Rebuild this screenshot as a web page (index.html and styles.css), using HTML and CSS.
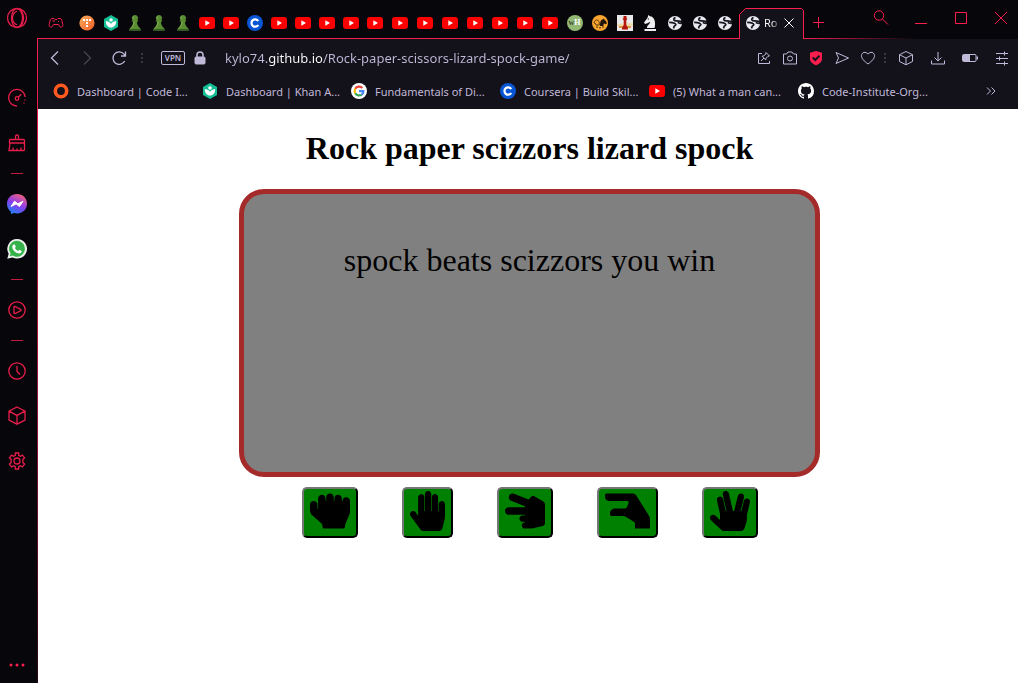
FILE: index.html
```html
<!DOCTYPE html>
<html lang="en">
<head>
<meta charset="utf-8">
<meta name="viewport" content="width=device-width, initial-scale=1">
<title>Rock paper scizzors lizard spock</title>
<link rel="stylesheet" href="styles.css">
</head>
<body>
<svg class="sprite" aria-hidden="true">
  <defs>
    <linearGradient id="messenger-fill" x1="0.2" y1="1" x2="0.7" y2="0">
      <stop offset="0" stop-color="#1488f5"/><stop offset="0.5" stop-color="#8a3df0"/><stop offset="1" stop-color="#f4617a"/>
    </linearGradient>
    <linearGradient id="orange-fill" x1="0" y1="0" x2="1" y2="1">
      <stop offset="0" stop-color="#fcb05c"/><stop offset="1" stop-color="#ee5b2a"/>
    </linearGradient>
  </defs>
  <symbol id="youtube" viewBox="0 0 16 16"><rect y="2" width="16" height="12" rx="3" fill="#f00"/><path d="M6.3 5.3v5.4L11 8z" fill="#fff"/></symbol>
  <symbol id="khan" viewBox="0 0 16 16"><path d="M8 0l7 3.9v8.2L8 16l-7-3.900V3.900z" fill="#14bf96"/><circle cx="8" cy="5" r="1.800" fill="#fff"/><path d="M2.800 6c2.800.3 4.600 1.500 5.200 3 .6-1.500 2.400-2.700 5.200-3 0 4.200-2.200 6.500-5.200 6.500S2.800 10.200 2.800 6z" fill="#fff"/></symbol>
  <symbol id="pawn" viewBox="0 0 16 16"><path d="M8 0a3 3 0 0 1 2.300 5l1.200 1-1.500 1c0 2.500.8 4 2.200 5.300 1 .9 1.500 1.800 1.500 3.200H2.300c0-1.400.5-2.300 1.500-3.200C5.200 11 6 9.500 6 7L4.500 6l1.200-1A3 3 0 0 1 8 0z" fill="#5a8c32"/><path d="M7 1.500a2 2 0 0 0-1 2.700M7 7c0 3-1.500 5-3 6.500" fill="none" stroke="#82ae53"/><path d="M2.300 14h11.400v1.700H2.300z" fill="#365f24"/></symbol>
  <symbol id="coursera" viewBox="0 0 16 16"><circle cx="8" cy="8" r="8" fill="#0956d5"/><path d="M11.300 10a3.700 3.700 0 1 1 0-4" fill="none" stroke="#fff" stroke-width="2.200"/></symbol>
  <symbol id="tynker" viewBox="0 0 16 16"><circle cx="8" cy="8" r="7.600" fill="url(#orange-fill)"/><path d="M4 4h2v2H4zM7 4h2v2H7zM10 4h2v2h-2zM7 7h2v2H7zM7 10h2v2H7z" fill="#fff"/></symbol>
  <symbol id="horse-badge" viewBox="0 0 16 16"><circle cx="8" cy="8" r="8" fill="#f8a62f"/><path d="M8 9.500c0-3 1-5 3.200-5.200l.6-1 .5 1.300c1.300.9 2 2.200 2.600 3.600l-1 1-2-.7-.6 2.500H8z" fill="#20160c"/><path d="M2 8c.3-2.300 1.700-3.300 3.500-3l1 1c1 1 .8 2.600.8 4H4L3.500 8.600z" fill="none" stroke="#5d3a11"/><path d="M4 12h2M7 12.800h2M10 12h2" stroke="#4a2f0c"/></symbol>
  <symbol id="chess-board" viewBox="0 0 16 16"><path d="M0 0h16v16H0z" fill="#e9e9eb"/><path d="M0 9l16-1v3H0z" fill="#efd9a8"/><path d="M2 11h12v2H2z" fill="#d9974a"/><path d="M6.500 1h3v2.500h1L9.300 5.500V10l1.700 3v1.500H5V13l1.700-3V5.500l-1.200-2h1z" fill="#b5160c"/></symbol>
  <symbol id="knight" viewBox="0 0 16 16"><path d="M5 13c0-3 3-4 3.300-6.300L5.500 8.300 3 9 2 7.500l3-4L6 1.600V0l2 1.200C11.500 1.600 13.500 5 13 10.500L12.500 13zM2.500 14H14v2H2.500z" fill="#eeeef0"/><circle cx="6.300" cy="4" r=".7" fill="#333"/></symbol>
  <symbol id="globe" viewBox="0 0 16 16"><circle cx="8" cy="8" r="7" fill="#e8eaf0"/><path d="M8.500 2.600C7 3 6.500 4 7 5c.5.900 1.500 1 3 .9 1.600 0 2.600.5 4.300.3v2c-1.700.4-2.300-.6-3.600-.5M2.200 7.300c2 .1 3.800.2 5.300 1 1.700.8 1.700 1.700.3 2.500-1 .6-.8 1.500-1.300 2.500" fill="none" stroke="#15131c" stroke-width="1.700"/></symbol>
  <symbol id="ring" viewBox="0 0 16 16"><circle cx="8" cy="8" r="5.700" fill="none" stroke="#ff5a1f" stroke-width="3.600"/></symbol>
  <symbol id="google" viewBox="0 0 16 16"><circle cx="8" cy="8" r="8" fill="#fff"/><g fill="none" stroke-width="2.200"><path d="M4.200 5.800A4.500 4.500 0 0 1 11.300 4.900" stroke="#ea4335"/><path d="M4.200 5.800a4.500 4.500 0 0 0 0 4.400" stroke="#fbbc05"/><path d="M4.200 10.200a4.500 4.500 0 0 0 6.500 1.400" stroke="#34a853"/><path d="M10.700 11.600A4.500 4.500 0 0 0 12.400 8.200H8" stroke="#4285f4"/></g></symbol>
  <symbol id="github" viewBox="0 0 16 16"><path fill="#fff" d="M8 0C3.580 0 0 3.580 0 8c0 3.540 2.290 6.530 5.470 7.590.4.070.55-.17.55-.38 0-.19-.01-.82-.01-1.490-2.010.37-2.530-.49-2.690-.94-.09-.23-.48-.94-.82-1.130-.28-.15-.68-.52-.01-.53.63-.01 1.080.58 1.230.82.72 1.210 1.870.87 2.330.66.07-.52.28-.87.51-1.070-1.780-.2-3.640-.89-3.640-3.950 0-.87.31-1.590.82-2.150-.08-.2-.36-1.020.08-2.120 0 0 .67-.21 2.200.82.64-.18 1.320-.27 2-.27s1.360.09 2 .27c1.530-1.040 2.200-.82 2.200-.82.44 1.100.16 1.920.08 2.120.51.56.82 1.270.82 2.150 0 3.070-1.870 3.750-3.650 3.950.29.25.54.73.54 1.480 0 1.070-.01 1.930-.01 2.200 0 .21.15.46.55.38A8.010 8.010 0 0 0 16 8c0-4.420-3.580-8-8-8z"/></symbol>
</svg>

<aside class="sidebar">
  <button class="opera" aria-label="Opera menu"><svg class="line" width="22" height="22" viewBox="0 0 22 22"><circle cx="11" cy="11" r="9.500"/><ellipse cx="11" cy="11" rx="5.500" ry="9.300"/><path d="M11 4c-6 3-6 11 0 14M13 2c6 4 6 14 0 18"/></svg></button>
  <nav class="rail" aria-label="Sidebar">
    <button aria-label="Speed dial"><svg class="line" viewBox="0 0 20 20"><path d="M10 18A8.300 8.300 0 1 1 18.200 9M11.200 9.200l3-3M18 11.500v1M17 14.500v1"/><circle cx="10" cy="10.500" r="1.800"/></svg></button>
    <button aria-label="Cleaner"><svg class="line" viewBox="0 0 20 20"><path d="M8.500 6V3.500a1.500 1.500 0 0 1 3 0V6M3.500 6.500h13a1 1 0 0 1 1 1V10h-15V7.500a1 1 0 0 1 1-1zM3 10l-1 7.500h14.500a1 1 0 0 0 1-1V10M6 17.500v-3M10 17.500v-2M14 17.500v-3"/></svg></button>
    <hr>
    <button aria-label="Messenger"><svg viewBox="0 0 20 20"><path d="M10 0c5.700 0 10 4.200 10 9.700s-4.300 9.700-10 9.700c-1 0-2-.1-2.900-.4L4 20l-.3-2.500A9.600 9.600 0 0 1 0 9.700C0 4.200 4.300 0 10 0z" fill="url(#messenger-fill)"/><path d="M4 12.500l3.500-5.300 3.400 2.600L16 7.200l-3.500 5.300-3.400-2.600z" fill="#fff" stroke="#fff" stroke-linejoin="round"/></svg></button>
    <button aria-label="WhatsApp"><svg viewBox="0 0 20 20"><path d="M10.200 0a9.800 9.800 0 1 1-4.700 18.400L.3 19.800l1.400-5A9.800 9.800 0 0 1 10.200 0z" fill="#eef2ee"/><path d="M10.200 1.700a8 8 0 1 1-4.500 14.800l-3 .8.900-2.900a8 8 0 0 1 6.600-12.700z" fill="#35b34a"/><path d="M6.500 5.500h1.300l1 2.300-.9 1.300c.8 1.500 1.800 2.300 3.200 2.900l1.200-1.200 2.400 1.200c.1 1.700-1.200 2.600-2.700 2.500C8.500 14 5.500 11 5.300 8.200c0-1.200.5-2.200 1.200-2.700z" fill="#fff"/></svg></button>
    <hr>
    <button aria-label="Player"><svg class="line" viewBox="0 0 20 20"><circle cx="10" cy="10" r="8.200"/><path d="M7 6.800v6.400l1 .3 6-2.800v-1L8 6.500z"/></svg></button>
    <hr>
    <button aria-label="History"><svg class="line" viewBox="0 0 20 20"><circle cx="10" cy="10" r="8.200"/><path d="M10 5v5.500l3 3"/></svg></button>
    <button aria-label="Extensions"><svg class="line" viewBox="0 0 20 20"><path d="M10 1l8 4.200v8.800l-8 4.200-8-4.200V5.200zM2 5.200l8 4.200 8-4.200M10 9.400v8.800"/></svg></button>
    <button aria-label="Settings"><svg class="line" viewBox="0 0 20 20"><circle cx="10" cy="10" r="3"/><path d="M8.300 2h3.400v2.300l1.700 1 2-1.200 2.200 2.800-1.700 1.500v3.200l1.700 1.500-2.200 2.800-2-1.200-1.700 1V18H8.300v-2.300l-1.700-1-2 1.200-2.200-2.800 1.700-1.500V8.400L2.400 6.900l2.200-2.800 2 1.200 1.700-1z"/></svg></button>
  </nav>
  <button class="more" aria-label="Sidebar setup"><svg width="16" height="4" viewBox="0 0 16 4"><circle cx="2" cy="2" r="1.500"/><circle cx="8" cy="2" r="1.500"/><circle cx="14" cy="2" r="1.500"/></svg></button>
</aside>

<div class="window">
  <header class="tab-strip">
    <div class="tabs">
      <button class="corner" aria-label="GX Corner"><svg class="line" width="16" height="16" viewBox="0 0 16 16"><path d="M4 3.500h2l1 1h2l1-1h2c1.500 0 2 2 2.800 6 .5 2.500-2 3.500-3 2l-1.300-2h-5l-1.300 2c-1 1.500-3.500.5-3-2C2 5.500 2.500 3.500 4 3.500zM4.500 6h2.500M10.500 6v1"/></svg></button>
      <button class="tab" aria-label="Tab 1"><svg><use href="#tynker"/></svg></button>
      <button class="tab" aria-label="Tab 2"><svg><use href="#khan"/></svg></button>
      <button class="tab" aria-label="Tab 3"><svg><use href="#pawn"/></svg></button>
      <button class="tab" aria-label="Tab 4"><svg><use href="#pawn"/></svg></button>
      <button class="tab" aria-label="Tab 5"><svg><use href="#pawn"/></svg></button>
      <button class="tab" aria-label="Tab 6"><svg><use href="#youtube"/></svg></button>
      <button class="tab" aria-label="Tab 7"><svg><use href="#youtube"/></svg></button>
      <button class="tab" aria-label="Tab 8"><svg><use href="#coursera"/></svg></button>
      <button class="tab" aria-label="Tab 9"><svg><use href="#youtube"/></svg></button>
      <button class="tab" aria-label="Tab 10"><svg><use href="#youtube"/></svg></button>
      <button class="tab" aria-label="Tab 11"><svg><use href="#youtube"/></svg></button>
      <button class="tab" aria-label="Tab 12"><svg><use href="#youtube"/></svg></button>
      <button class="tab" aria-label="Tab 13"><svg><use href="#youtube"/></svg></button>
      <button class="tab wide" aria-label="Tab 14"><svg><use href="#youtube"/></svg></button>
      <button class="tab wide" aria-label="Tab 15"><svg><use href="#youtube"/></svg></button>
      <button class="tab wide" aria-label="Tab 16"><svg><use href="#youtube"/></svg></button>
      <button class="tab wide" aria-label="Tab 17"><svg><use href="#youtube"/></svg></button>
      <button class="tab wide" aria-label="Tab 18"><svg><use href="#youtube"/></svg></button>
      <button class="tab wide" aria-label="Tab 19"><svg><use href="#youtube"/></svg></button>
      <button class="tab wide" aria-label="Tab 20"><svg><use href="#youtube"/></svg></button>
      <button class="tab wide"><span class="wikihow">w<b>H</b></span></button>
      <button class="tab wide" aria-label="Tab 22"><svg><use href="#horse-badge"/></svg></button>
      <button class="tab wide" aria-label="Tab 23"><svg><use href="#chess-board"/></svg></button>
      <button class="tab wide" aria-label="Tab 24"><svg><use href="#knight"/></svg></button>
      <button class="tab wide" aria-label="Tab 25"><svg><use href="#globe"/></svg></button>
      <button class="tab wide" aria-label="Tab 26"><svg><use href="#globe"/></svg></button>
      <button class="tab wide" aria-label="Tab 27"><svg><use href="#globe"/></svg></button>
    </div>
    <div class="active-tab">
      <svg class="outline" viewBox="0 0 65 31" preserveAspectRatio="none" aria-hidden="true"><path d="M.5 31V6.500l6-6h56l2 2V31"/></svg>
      <svg class="favicon" aria-hidden="true"><use href="#globe"/></svg>
      <span class="tab-title">Ro</span>
      <button class="close-tab" aria-label="Close tab"><svg width="10" height="10" viewBox="0 0 10 10"><path d="M.5.500l9 9M9.500.500l-9 9"/></svg></button>
    </div>
    <div class="strip-end">
      <button class="new-tab" aria-label="New tab"><svg class="line" width="12" height="12" viewBox="0 0 12 12"><path d="M6.500 1v11M1 6.500h11"/></svg></button>
      <div class="window-controls">
        <button aria-label="Search tabs"><svg class="line" width="16" height="16" viewBox="0 0 16 16"><circle cx="6" cy="5.500" r="4.700"/><path d="M9.500 9l5.500 5.500"/></svg></button>
        <button aria-label="Minimize"><svg class="line" width="16" height="16" viewBox="0 0 16 16"><path d="M2 13.500h12"/></svg></button>
        <button aria-label="Maximize"><svg class="line" width="16" height="16" viewBox="0 0 16 16"><path d="M2.500 2.500h11v11h-11z"/></svg></button>
        <button aria-label="Close"><svg class="line" width="16" height="16" viewBox="0 0 16 16"><path d="M2 2l12 12M14 2L2 14"/></svg></button>
      </div>
    </div>
  </header>

  <div class="toolbar">
    <div class="history">
      <button aria-label="Back"><svg viewBox="0 0 16 16"><path d="M11 1.500L4.500 8l6.500 6.500"/></svg></button>
      <button aria-label="Forward" disabled><svg viewBox="0 0 16 16"><path d="M5 1.500L11.500 8 5 14.500"/></svg></button>
      <button aria-label="Reload"><svg viewBox="0 0 16 16"><path d="M13.700 11A6.200 6.200 0 1 1 13 4.200L14.500 6M14.500 1.500V6H10"/></svg></button>
    </div>
    <span class="dots"></span>
    <button class="vpn">VPN</button>
    <svg class="lock" width="12" height="14" viewBox="0 0 12 14" aria-hidden="true"><path d="M3 6V4a3 3 0 0 1 6 0v2"/><rect x="1" y="6" width="10" height="7" rx="1"/></svg>
    <input class="address" type="text" aria-label="Address" value="kylo74.github.io/Rock-paper-scissors-lizard-spock-game/">
    <div class="tools">
      <button aria-label="Pinboard"><svg viewBox="0 0 16 16"><path d="M6 3.500H2.500v10h11V11M5 11l3-3M10 2.500l3.500 3.500-1.500.3L10 8.300 9.800 10 6 6.200 7.700 6l2-2z"/></svg></button>
      <button aria-label="Snapshot"><svg viewBox="0 0 16 16"><path d="M1.500 4h3L6 2h4l1.500 2h3v10h-13z"/><circle cx="8" cy="8.500" r="2.500"/></svg></button>
      <button aria-label="Ad blocker"><svg class="shield" viewBox="0 0 16 16"><path d="M8 1l6 1.800V9c0 3-3 5-6 6.300C5 14 2 12 2 9V2.800z"/><path class="check" d="M4.700 7.500L7.200 10l4.300-4.200"/></svg></button>
      <button aria-label="My Flow"><svg viewBox="0 0 16 16"><path d="M2 2.500L14.500 8 2 13.500 4.500 8z"/></svg></button>
      <button aria-label="Bookmark"><svg viewBox="0 0 16 16"><path d="M8 14C4 11 1.500 8.700 1.500 5.700c0-3.500 4.500-4.700 6.500-1.500 2-3.200 6.500-2 6.500 1.500 0 3-2.500 5.300-6.500 8.300z"/></svg></button>
    </div>
    <span class="dots"></span>
    <div class="extras">
      <button aria-label="Extensions"><svg viewBox="0 0 16 16"><path d="M8 1.500l6.500 3.200v6.800L8 14.800l-6.500-3.300V4.700zM1.500 4.700L8 8l6.500-3.300M8 8v6.800"/></svg></button>
      <button aria-label="Downloads"><svg viewBox="0 0 16 16"><path d="M8 2v8.500M4.500 7.500L8 11l3.500-3.500M1.500 10.500V14h13v-3.500"/></svg></button>
      <button aria-label="Battery saver"><svg viewBox="0 0 16 16"><rect x=".5" y="4.500" width="13.500" height="7" rx="1"/><path class="solid" d="M1 5h7v6H1zM14.500 6.500H16v3h-1.500z"/></svg></button>
      <button aria-label="Easy setup"><svg viewBox="0 0 16 16"><path d="M2 3.500h12M2 8.500h12M2 13.500h12M10.500 1.500v4M5.500 6.500v4M10.500 11.500v4"/></svg></button>
    </div>
  </div>

  <nav class="bookmarks" aria-label="Bookmarks">
    <a href="#"><svg><use href="#ring"/></svg>Dashboard | Code I...</a>
    <a href="#"><svg><use href="#khan"/></svg>Dashboard | Khan A...</a>
    <a href="#"><svg><use href="#google"/></svg>Fundamentals of Di...</a>
    <a href="#"><svg><use href="#coursera"/></svg>Coursera | Build Skil...</a>
    <a href="#"><svg><use href="#youtube"/></svg>(5) What a man can...</a>
    <a href="#"><svg><use href="#github"/></svg>Code-Institute-Org...</a>
    <button class="overflow" aria-label="More bookmarks"><svg width="10" height="8" viewBox="0 0 10 8"><path d="M1 .5L4.500 4 1 7.500M5.500.500L9 4 5.500 7.500"/></svg></button>
  </nav>

  <main class="page">
    <h1>Rock paper scizzors lizard spock</h1>
    <section class="board"><p>spock beats scizzors you win</p></section>
    <div class="choices">
      <button aria-label="Rock"><svg width="40" height="40" viewBox="0 0 512 512"><path d="M464.800 80c-26.900-.4-48.800 21.200-48.800 48h-8V96.800c0-26.300-20.900-48.300-47.200-48.800-26.900-.4-48.800 21.200-48.800 48v32h-8V80.800c0-26.300-20.900-48.300-47.200-48.800-26.900-.4-48.800 21.200-48.800 48v48h-8V96.800c0-26.300-20.900-48.300-47.200-48.800-26.900-.4-48.800 21.200-48.800 48v136l-8-7.100v-48.100c0-26.300-20.900-48.300-47.200-48.800C21.900 127.600 0 149.200 0 176v66.400c0 27.400 11.700 53.500 32.200 71.800l111.700 99.300c10.200 9.100 16.100 22.200 16.100 35.900v6.700c0 13.300 10.700 24 24 24h240c13.300 0 24-10.700 24-24v-2.900c0-12.800 2.600-25.500 7.500-37.300l49-116.300c5-11.800 7.500-24.500 7.500-37.300V128.800c0-26.300-20.900-48.400-47.200-48.800z"/></svg></button>
      <button aria-label="Paper"><svg width="35" height="40" viewBox="0 0 448 512"><path d="M408.781 128.007C386.356 127.578 368 146.360 368 168.790V256h-8V79.790c0-22.430-18.356-41.212-40.781-40.783C297.488 39.423 280 57.169 280 79v177h-8V40.790C272 18.360 253.644-.422 231.219.007 209.488.423 192 18.169 192 40v216h-8V80.790c0-22.430-18.356-41.212-40.781-40.783C121.488 40.423 104 58.169 104 80v235.992l-31.648-43.519c-12.993-17.866-38.009-21.817-55.877-8.823-17.865 12.994-21.815 38.010-8.822 55.877l125.601 172.705A48 48 0 0 0 172.073 512h197.590c22.274 0 41.622-15.324 46.724-37.006l26.508-112.660a192.011 192.011 0 0 0 5.104-43.975V168c.001-21.831-17.487-39.577-39.218-39.993z"/></svg></button>
      <button aria-label="Scissors"><svg width="40" height="40" viewBox="0 0 512 512"><path d="M216 440c0-22.092 17.909-40 40-40v-8h-32c-22.091 0-40-17.908-40-40s17.909-40 40-40h32v-8H48c-26.510 0-48-21.490-48-48s21.490-48 48-48h208v-13.572l-177.551-69.740c-24.674-9.694-36.818-37.555-27.125-62.228 9.693-24.674 37.554-36.817 62.228-27.124l190.342 74.765 24.872-31.090c12.306-15.381 33.978-19.515 51.081-9.741l112 64A40.002 40.002 0 0 1 512 168v240c0 18.562-12.770 34.686-30.838 38.937l-136 32A39.982 39.982 0 0 1 336 480h-80c-22.091 0-40-17.908-40-40z"/></svg></button>
      <button aria-label="Lizard"><svg width="45" height="40" viewBox="0 0 576 512"><path d="M384 480h192V363.778a95.998 95.998 0 0 0-14.833-51.263L398.127 54.368A48 48 0 0 0 357.544 32H24C10.745 32 0 42.745 0 56v16c0 30.928 25.072 56 56 56h229.981c12.844 0 21.556 13.067 16.615 24.923l-21.410 51.385A32 32 0 0 1 251.648 224H128c-35.346 0-64 28.654-64 64v8c0 13.255 10.745 24 24 24h147.406a47.995 47.995 0 0 1 25.692 7.455l111.748 70.811A24.001 24.001 0 0 1 384 418.539V480z"/></svg></button>
      <button aria-label="Spock"><svg width="40" height="40" viewBox="0 0 512 512"><path d="M481.300 97.100c-21.500-5.100-43.100 8.200-48.200 29.600L402.300 256h-11.100l43.600-174.300c5.400-21.400-7.700-43.100-29.100-48.500s-43.100 7.700-48.500 29.100L308.800 256h-15.100L242 31.100c-5-21.600-26.400-35-48-30.100-21.500 4.900-35 26.400-30 47.900l47.600 207h-9.800L167 103.100c-4.900-21.500-26.300-35-47.900-30.100-21.500 4.900-35 26.300-30.100 47.900l39 171.600v79.400l-60.600-57c-16.100-15.100-41.400-14.400-56.500 1.700s-14.400 41.400 1.700 56.500L146.300 499c8.900 8.400 20.700 13 32.900 13h216.700c21.300 0 40-14 46-34.400l26.200-88.300c2.600-8.900 4-18 4-27.300v-42c0-7.500.9-15 2.600-22.200L511 145.300c5-21.500-8.300-43.100-29.700-48.200z"/></svg></button>
    </div>
  </main>
</div>
</body>
</html>
```
FILE: styles.css
```css
:root {
  --accent: #fa1e4e;
  --chrome: #07070b;
  --panel: #13111a;
  --ink: #c0b9d8;
}

* { box-sizing: border-box; }

body {
  margin: 0;
  min-height: 100vh;
  display: grid;
  grid-template-columns: 38px minmax(0, 1fr);
  background: var(--chrome);
  font-family: "Noto Sans", "Open Sans", sans-serif;
}

button {
  padding: 0;
  border: 0;
  background: none;
  color: inherit;
  font: inherit;
  cursor: pointer;
}

svg { display: block; }

.sprite {
  position: absolute;
  width: 0;
  height: 0;
}

.line {
  fill: none;
  stroke: var(--accent);
}

/* Sidebar */
.sidebar {
  display: flex;
  flex-direction: column;
  align-items: center;
  padding: 0 4px 16px 0;
  background:
    linear-gradient(var(--accent), #8c1433 60%, #16070d) right 38px / 1px 100% no-repeat,
    var(--chrome);
}

.sidebar .line {
  stroke: #e81d4a;
  stroke-width: 1.3;
}

.opera {
  height: 38px;
  padding-bottom: 2px;
}

.rail {
  flex: 1;
  display: flex;
  flex-direction: column;
  align-items: center;
  padding-top: 50px;
}

.rail svg {
  width: 20px;
  height: 20px;
}

.rail button + button { margin-top: 25px; }

.rail hr {
  width: 12px;
  height: 1px;
  margin: 20px 0;
  border: 0;
  background: #c51b41;
}

.more { fill: var(--accent); }

/* Tab strip */
.window {
  display: flex;
  flex-direction: column;
  min-width: 0;
}

.tab-strip {
  display: flex;
  align-items: flex-end;
  height: 39px;
}

.tabs {
  display: flex;
  height: 31px;
  padding-right: 2px;
  border-bottom: 1px solid var(--accent);
}

.corner {
  width: 36px;
  margin-right: 1px;
  display: grid;
  place-items: center;
}

.tab {
  width: 24px;
  display: grid;
  place-items: center;
}

.wide { width: 25px; }

.tab svg, .favicon, .bookmarks a svg {
  width: 16px;
  height: 16px;
  flex: none;
}

.wikihow {
  width: 16px;
  height: 16px;
  border-radius: 50%;
  background: #93b874;
  color: #3c4a33;
  font: bold 8px/16px "Liberation Serif", serif;
}

.wikihow b { color: #fff; }

.active-tab {
  position: relative;
  display: flex;
  align-items: center;
  width: 65px;
  height: 31px;
  padding: 0 0 2px 6px;
  color: #fff;
}

.outline {
  position: absolute;
  inset: 0;
  width: 100%;
  height: 100%;
  fill: var(--panel);
  stroke: var(--accent);
}

.favicon, .tab-title, .close-tab { position: relative; }

.tab-title {
  margin: 0 6px 0 3px;
  font-size: 11px;
  color: transparent;
  background: linear-gradient(90deg, #fff 60%, #55535c);
  background-clip: text;
}

.close-tab svg { stroke: #fff; }

.strip-end {
  flex: 1;
  display: flex;
  justify-content: space-between;
  align-items: flex-start;
  height: 39px;
  padding: 10px 9px 0 8px;
  background: linear-gradient(90deg, var(--accent), transparent) 0 100% / 110px 1px no-repeat;
}

.new-tab { padding-top: 6px; }

.window-controls {
  display: flex;
  gap: 24px;
}

/* Toolbar */
.toolbar {
  display: flex;
  align-items: center;
  height: 38px;
  padding: 0 8px 0 9px;
  background: var(--panel);
  color: var(--ink);
}

.toolbar svg {
  fill: none;
  stroke: var(--ink);
}

.toolbar button svg {
  width: 16px;
  height: 16px;
}

.history {
  display: flex;
  gap: 16px;
}

.history svg { stroke-width: 1.3; }

.history button:disabled { opacity: 0.3; }

.dots {
  width: 2px;
  height: 11px;
  margin: 0 14px;
  background: repeating-linear-gradient(#3a3744 0 2px, transparent 2px 4px);
}

.toolbar .vpn {
  width: 24px;
  height: 14px;
  margin: 0 9px 0 4px;
  border: 1px solid var(--ink);
  border-radius: 2px;
  font-size: 8px;
  line-height: 12px;
  font-weight: 600;
}

.toolbar .lock { fill: var(--ink); }
.toolbar .lock path { fill: none; stroke-width: 1.500; }

.address {
  flex: 1;
  min-width: 0;
  height: 24px;
  margin-left: 19px;
  padding: 0;
  border: 0;
  outline: 0;
  font: 13px "Noto Sans", "Open Sans", sans-serif;
  color: var(--ink);
  background: linear-gradient(90deg, var(--ink) 43px, #fff 43px 99px, var(--ink) 99px);
  background-clip: text;
  -webkit-text-fill-color: transparent;
}

.tools {
  display: flex;
  gap: 10px;
}

.tools + .dots { margin: 0 12px 0 8px; }

.toolbar .shield { fill: var(--accent); stroke: none; }
.toolbar .check { fill: none; stroke: var(--panel); stroke-width: 2; }
.toolbar .solid { fill: var(--ink); stroke: none; }

.extras {
  display: flex;
  gap: 16px;
}

/* Bookmarks */
.bookmarks {
  display: flex;
  align-items: center;
  gap: 12px;
  height: 32px;
  padding: 0 22px 4px 15px;
  background: var(--panel);
  color: var(--ink);
}

.bookmarks a {
  display: flex;
  align-items: center;
  gap: 8px;
  width: 137px;
  color: inherit;
  font-size: 11px;
  text-decoration: none;
  white-space: nowrap;
}

.overflow {
  margin-left: auto;
}

.overflow svg {
  fill: none;
  stroke: var(--ink);
}

/* Game page */
.page {
  flex: 1;
  padding: 21px 0 40px 3px;
  background: #fff;
  color: #000;
  font-family: "Liberation Serif", "Times New Roman", serif;
  text-align: center;
}

.page h1 {
  margin: 0 0 22px;
  font-size: 32px;
  line-height: 37px;
}

.board {
  width: 59.5%;
  min-height: 288px;
  margin: 0 auto;
  padding: 48px 20px;
  border: 5px solid brown;
  border-radius: 25px;
  background: gray;
}

.board p {
  margin: 0;
  font-size: 32px;
  line-height: 37px;
}

.choices {
  display: flex;
  justify-content: center;
  gap: 44px;
  margin-top: 10px;
}

.choices button {
  padding: 2px 6px 5px;
  border: 2px outset #767676;
  border-color: #767676 #212121 #212121 #767676;
  border-radius: 5px;
  background: green;
}
```
